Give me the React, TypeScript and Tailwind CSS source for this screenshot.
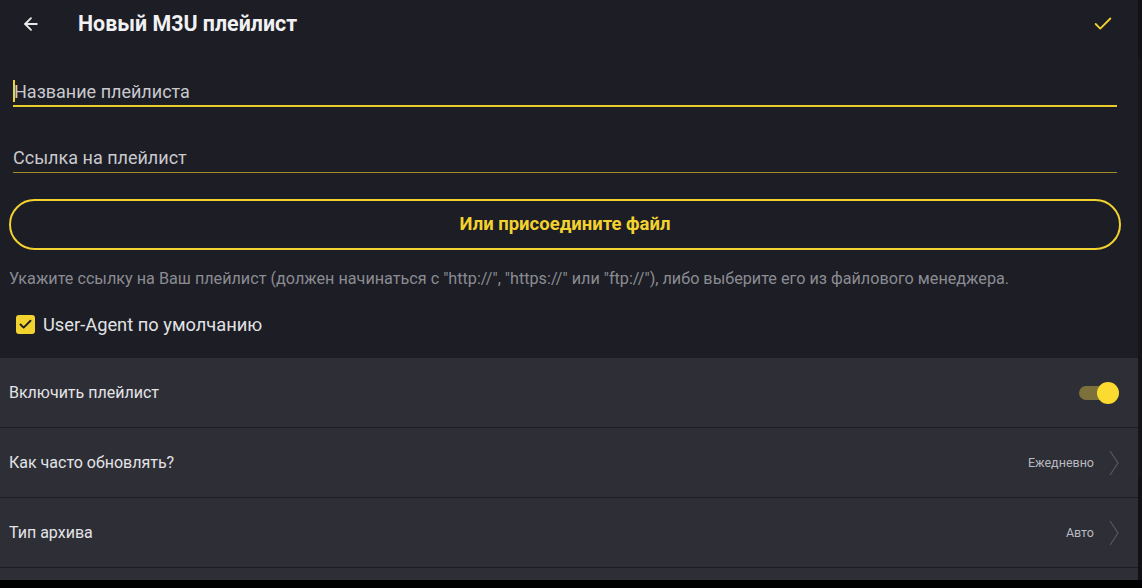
import { ArrowLeft, Check } from 'lucide-react';

function Row({ label, children }: { label: string; children?: React.ReactNode }) {
    return (
        <div className="h-[70px] shrink-0 flex items-center justify-between pl-[9px] pr-[19px] bg-[#2d2e36] border-b border-[#1c1d24]">
            <span className="text-[16px] text-[#e4e4e6]">{label}</span>
            {children}
        </div>
    );
}

function Value({ text }: { text: string }) {
    return (
        <div className="flex items-center gap-[15px] text-[12.5px] text-[#b9bac0]">
            <span>{text}</span>
            <svg width="10" height="26" viewBox="0 0 10 26" fill="none" stroke="#55565e" strokeWidth="1.3">
                <polyline points="1,1 9,13 1,25" />
            </svg>
        </div>
    );
}

export default function App() {
    return (
        <div className="w-[1142px] h-[588px] bg-black flex overflow-hidden" style={{ fontFamily: 'Roboto, "Noto Sans", sans-serif' }}>
            <div className="w-[1138px] h-[580px] bg-[#1c1d25] flex flex-col overflow-hidden">
                <header className="h-[48px] shrink-0 flex items-center pl-[21px] pr-[24px]">
                    <ArrowLeft className="w-[20px] h-[20px] text-[#e8e8ea]" strokeWidth={2.2} />
                    <h1 className="ml-[37px] text-[21.4px] font-bold text-[#f1f1f3]">Новый M3U плейлист</h1>
                    <Check className="ml-auto w-[22px] h-[22px] text-[#f2d22e]" strokeWidth={2} />
                </header>

                <div className="shrink-0 px-[13px] pr-[21px]">
                    <div className="mt-[29px] h-[30px] flex items-center border-b-2 border-[#e9cb2a]">
                        <span className="w-[2px] h-[22px] bg-[#f2d22e]" />
                        <span className="text-[18px] text-[#c9c9cd] -ml-[1px]">Название плейлиста</span>
                    </div>
                    <div className="mt-[36px] h-[30px] flex items-center border-b border-[#a08c25]">
                        <span className="text-[18px] text-[#c9c9cd]">Ссылка на плейлист</span>
                    </div>
                </div>

                <div className="shrink-0 px-[9px] pr-[17px] mt-[26px]">
                    <button className="w-full h-[51px] rounded-full border-2 border-[#f2d22e] text-[#f2d22e] text-[18.5px] font-bold">
                        Или присоедините файл
                    </button>
                </div>

                <p className="shrink-0 mt-[17px] px-[9px] text-[16.2px] leading-[24px] text-[#8b8c92]">
                    Укажите ссылку на Ваш плейлист (должен начинаться с "http://", "https://" или "ftp://"), либо выберите его из файлового менеджера.
                </p>

                <label className="shrink-0 mt-[20px] ml-[16px] flex items-center gap-[8px]">
                    <span className="w-[19px] h-[19px] rounded-[3px] bg-[#f2d22e] flex items-center justify-center">
                        <Check className="w-[15px] h-[15px] text-[#1c1d25]" strokeWidth={3} />
                    </span>
                    <span className="text-[18.3px] text-[#e2e2e4]">User-Agent по умолчанию</span>
                </label>

                <div className="mt-[20px] flex flex-col">
                    <Row label="Включить плейлист">
                        <div className="relative w-[40px] h-[22px] flex items-center">
                            <div className="w-[30px] h-[14px] rounded-full bg-[#7c713a]" />
                            <div className="absolute right-0 w-[22px] h-[22px] rounded-full bg-[#fbdb2f]" />
                        </div>
                    </Row>
                    <Row label="Как часто обновлять?">
                        <Value text="Ежедневно" />
                    </Row>
                    <Row label="Тип архива">
                        <Value text="Авто" />
                    </Row>
                    <div className="h-[20px] shrink-0 bg-[#2d2e36]" />
                </div>
            </div>
            <div className="w-[4px] h-[580px] bg-[#111216] flex flex-col">
                <div className="mt-[58px] h-[420px] w-[3px] bg-[#15161a]" />
            </div>
        </div>
    );
}
